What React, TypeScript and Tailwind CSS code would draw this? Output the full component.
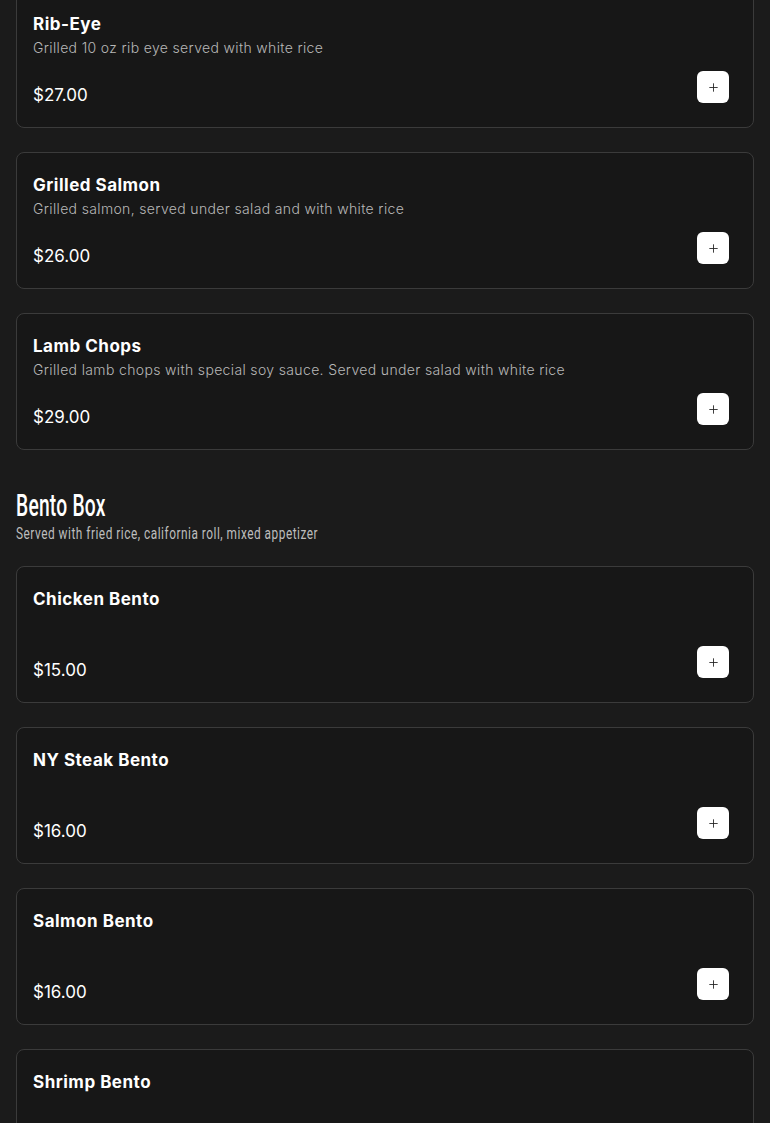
import { Plus } from 'lucide-react';

type Item = {
  name: string;
  description?: string;
  price: string;
};

const mains: Item[] = [
  { name: 'Rib-Eye', description: 'Grilled 10 oz rib eye served with white rice', price: '$27.00' },
  { name: 'Grilled Salmon', description: 'Grilled salmon, served under salad and with white rice', price: '$26.00' },
  { name: 'Lamb Chops', description: 'Grilled lamb chops with special soy sauce. Served under salad with white rice', price: '$29.00' },
];

const bento: Item[] = [
  { name: 'Chicken Bento', price: '$15.00' },
  { name: 'NY Steak Bento', price: '$16.00' },
  { name: 'Salmon Bento', price: '$16.00' },
  { name: 'Shrimp Bento', price: '$16.00' },
];

function MenuCard({ item }: { item: Item }) {
  return (
    <div className="rounded-lg border border-[#3b3b3b] bg-[#171717] px-4 pt-[20px] pb-[24px]">
      <h3 className="text-[17px] leading-6 font-bold text-white tracking-[0.5px]">{item.name}</h3>
      <p className="mt-[2px] h-5 text-[14px] leading-5 font-light text-[#b8b8b8] tracking-[0.35px]">
        {item.description}
      </p>
      <div className="mt-[13px] flex h-8 items-start justify-between">
        <span className="pt-[12px] text-[17px] leading-6 text-white">{item.price}</span>
        <button className="mr-[8px] flex h-8 w-8 items-center justify-center rounded-md bg-white text-[#222]">
          <Plus size={13} strokeWidth={1.6} />
        </button>
      </div>
    </div>
  );
}

export default function App() {
  return (
    <main
      className="min-h-screen overflow-hidden bg-[#1b1b1b] px-4"
      style={{ fontFamily: 'Inter, "Open Sans", sans-serif' }}
    >
      <div className="-mt-[9px] flex flex-col gap-6">
        {mains.map((item) => (
          <MenuCard key={item.name} item={item} />
        ))}
      </div>

      <section className="mt-[40px]">
        <div style={{ fontFamily: 'Roboto, "DejaVu Sans Condensed", sans-serif' }}>
          <h2 className="origin-left scale-x-[0.62] whitespace-nowrap text-[31px] leading-8 font-medium text-white tracking-[0.4px]">
            Bento Box
          </h2>
          <p className="mt-[2px] origin-left scale-x-[0.74] whitespace-nowrap text-[16px] leading-5 text-[#bdbdbd] tracking-[0.7px]">
            Served with fried rice, california roll, mixed appetizer
          </p>
        </div>

        <div className="mt-[22px] flex flex-col gap-6 pb-10">
          {bento.map((item) => (
            <MenuCard key={item.name} item={item} />
          ))}
        </div>
      </section>
    </main>
  );
}
